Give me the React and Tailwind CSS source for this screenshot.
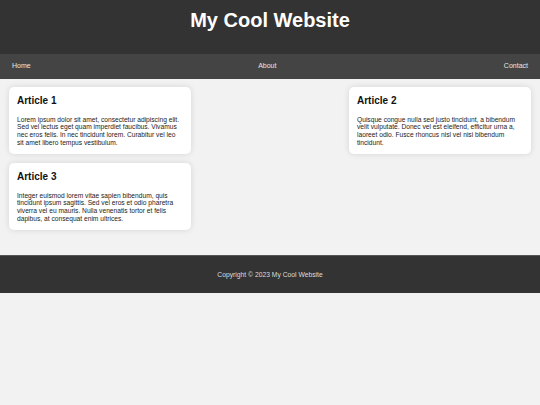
export default function App() {
  const articles = [
    {
      title: "Article 1",
      body: "Lorem ipsum dolor sit amet, consectetur adipiscing elit. Sed vel lectus eget quam imperdiet faucibus. Vivamus nec eros felis. In nec tincidunt lorem. Curabitur vel leo sit amet libero tempus vestibulum.",
    },
    {
      title: "Article 2",
      body: "Quisque congue nulla sed justo tincidunt, a bibendum velit vulputate. Donec vel est eleifend, efficitur urna a, laoreet odio. Fusce rhoncus nisl vel nisi bibendum tincidunt.",
    },
    {
      title: "Article 3",
      body: "Integer euismod lorem vitae sapien bibendum, quis tincidunt ipsum sagittis. Sed vel eros et odio pharetra viverra vel eu mauris. Nulla venenatis tortor et felis dapibus, at consequat enim ultrices.",
    },
  ];
  return (
    <div className="min-h-screen bg-[#f2f2f2] font-['Liberation_Sans',Arial,sans-serif]">
      <header className="h-[54px] bg-[#333] pt-[9px] text-center text-white">
        <h1 className="text-[20px] font-bold leading-[23px]">My Cool Website</h1>
      </header>
      <nav className="flex h-[25px] items-center justify-between bg-[#444] px-[12px] text-[7px] text-[#e6e6e6]">
        <span>Home</span>
        <span>About</span>
        <span>Contact</span>
      </nav>
      <main className="flex flex-wrap justify-between gap-y-[9px] px-[9px] pb-[25px] pt-[8px]">
        {articles.map((a) => (
          <article
            key={a.title}
            className="w-[182px] rounded-[5px] bg-white p-[8px] shadow-[0_0_6px_rgba(0,0,0,0.12)]"
          >
            <h2 className="mb-[9px] text-[10px] font-bold leading-[11.5px] text-[#111]">{a.title}</h2>
            <p className="text-[6.67px] leading-[7.67px] text-[#222]">{a.body}</p>
          </article>
        ))}
      </main>
      <footer className="flex h-[38px] items-center justify-center border-t border-[#555] bg-[#333] text-[6.75px] text-[#ddd]">
        Copyright © 2023 My Cool Website
      </footer>
    </div>
  );
}
